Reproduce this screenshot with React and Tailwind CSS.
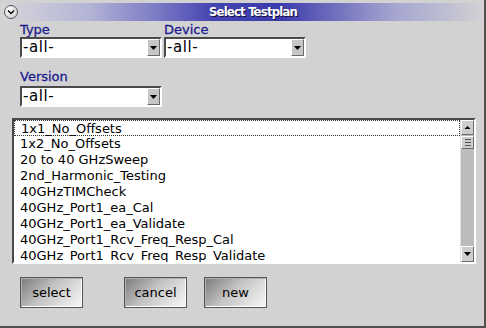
import React from 'react'

const ITEMS = [
  '1x1_No_Offsets',
  '1x2_No_Offsets',
  '20 to 40 GHzSweep',
  '2nd_Harmonic_Testing',
  '40GHzTIMCheck',
  '40GHz_Port1_ea_Cal',
  '40GHz_Port1_ea_Validate',
  '40GHz_Port1_Rcv_Freq_Resp_Cal',
  '40GHz_Port1_Rcv_Freq_Resp_Validate',
]

const sans = { fontFamily: '"DejaVu Sans", "Liberation Sans", sans-serif' }

function Arrow({ up }) {
  return (
    <svg width="7" height="6" viewBox="0 0 7 6">
      {up ? (
        <path d="M0.5 4 L3.5 1 L6.5 4 Z" fill="#000" />
      ) : (
        <path d="M0 1 H7 L3.5 5 Z" fill="#000" />
      )}
    </svg>
  )
}

function Combo({ value }) {
  return (
    <div className="flex h-[21px] w-[142px] border-2 border-t-[#4a4a4a] border-l-[#4a4a4a] border-r-white border-b-white bg-white">
      <span className="flex-1 pl-[1px] text-[15px] leading-[17px] tracking-[0.6px] text-black">{value}</span>
      <div className="flex w-[13px] items-center justify-center border border-t-white border-l-white border-r-[#6a6a6a] border-b-[#6a6a6a] bg-[#c6c6c6]">
        <Arrow />
      </div>
    </div>
  )
}

function Label({ children }) {
  return (
    <div className="h-[15px] text-[13px] leading-[15px] text-[#1c1c8e] [-webkit-text-stroke:0.3px_#1c1c8e]">
      {children}
    </div>
  )
}

function Button({ children, className }) {
  return (
    <button
      className={`h-[31px] w-[63px] border border-[#555] bg-[linear-gradient(135deg,#7a7a7a_0%,#c4c4c4_45%,#f7f7f7_100%)] text-[13px] text-black shadow-[inset_1px_1px_0_#b0b0b0,inset_-1px_-1px_0_#fff] ${className || ''}`}
    >
      {children}
    </button>
  )
}

export default function App() {
  return (
    <div
      className="flex h-[328px] w-[486px] flex-col border-r-2 border-b-2 border-r-[#505050] border-b-[#505050] bg-[#d2d2d2]"
      style={sans}
    >
      {/* title bar */}
      <div className="mx-[2px] mt-[3px] flex h-[18px] items-center bg-[linear-gradient(to_right,#d6d6da_0%,#b4b4d6_18%,#7c7cc6_32%,#4444b0_44%,#3a3aac_58%,#6a6abc_68%,#a6a6d0_82%,#d0d0d4_100%)]">
        <div className="ml-[2px] flex h-[14px] w-[14px] items-center justify-center rounded-full border border-[#555] bg-[radial-gradient(circle_at_35%_35%,#ffffff,#c4c4c4)]">
          <svg width="8" height="6" viewBox="0 0 8 6">
            <path d="M1 1.5 L4 4.5 L7 1.5" fill="none" stroke="#000" strokeWidth="1.4" />
          </svg>
        </div>
        <div
          className="flex-1 pl-[6px] text-center text-[13px] font-bold tracking-[-0.8px] text-white [text-shadow:1px_1px_0_#101040]"
          style={{ fontFamily: '"DejaVu Sans Condensed", sans-serif' }}
        >
          Select Testplan
        </div>
      </div>

      {/* filters */}
      <div className="ml-[20px] mt-[1px] flex gap-[2px]">
        <div className="flex flex-col">
          <Label>Type</Label>
          <Combo value="-all-" />
        </div>
        <div className="flex flex-col">
          <Label>Device</Label>
          <Combo value="-all-" />
        </div>
      </div>
      <div className="ml-[20px] mt-[11px] flex flex-col">
        <div className="mb-[2px]">
          <Label>Version</Label>
        </div>
        <Combo value="-all-" />
      </div>

      {/* list */}
      <div className="ml-[12px] mt-[11px] flex h-[146px] w-[464px] border-2 border-t-[#4a4a4a] border-l-[#4a4a4a] border-r-white border-b-white bg-white">
        <div className="flex-1 overflow-hidden">
          {ITEMS.map((item, i) => (
            <div
              key={item}
              className={`h-[16px] whitespace-nowrap pl-[6px] text-[13px] leading-[15px] text-black ${
                i === 0 ? 'border border-dotted border-[#333] pl-[5px] leading-[13px]' : ''
              }`}
            >
              {item}
            </div>
          ))}
        </div>
        <div className="flex w-[14px] flex-col border-l border-l-[#e0e0e0] bg-[#bcbcbc]">
          <div className="flex h-[15px] items-center justify-center border border-t-white border-l-white border-r-[#6a6a6a] border-b-[#6a6a6a] bg-[#cdcdcd]">
            <Arrow up />
          </div>
          <div className="mt-[1px] flex h-[13px] flex-col items-center justify-center gap-[2px] border border-t-white border-l-white border-r-[#6a6a6a] border-b-[#6a6a6a] bg-[#cdcdcd]">
            <div className="h-px w-[6px] bg-[#555]" />
            <div className="h-px w-[6px] bg-[#555]" />
            <div className="h-px w-[6px] bg-[#555]" />
          </div>
          <div className="flex-1" />
          <div className="flex h-[16px] items-center justify-center border border-t-white border-l-white border-r-[#6a6a6a] border-b-[#6a6a6a] bg-[#cdcdcd]">
            <Arrow />
          </div>
        </div>
      </div>

      {/* buttons */}
      <div className="ml-[20px] mt-[13px] flex">
        <Button>select</Button>
        <Button className="ml-[41px]">cancel</Button>
        <Button className="ml-[17px]">new</Button>
      </div>
    </div>
  )
}
